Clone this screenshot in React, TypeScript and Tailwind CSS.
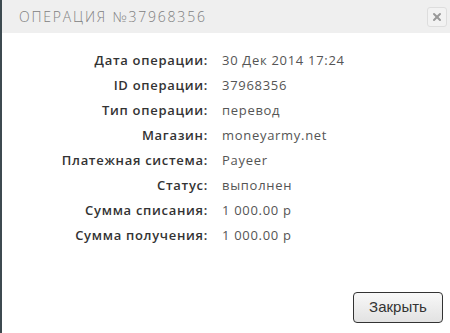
import { X } from "lucide-react";

const rows: [string, string][] = [
  ["Дата операции:", "30 Дек 2014 17:24"],
  ["ID операции:", "37968356"],
  ["Тип операции:", "перевод"],
  ["Магазин:", "moneyarmy.net"],
  ["Платежная система:", "Payeer"],
  ["Статус:", "выполнен"],
  ["Сумма списания:", "1 000.00 р"],
  ["Сумма получения:", "1 000.00 р"],
];

export default function App() {
  return (
    <div className="w-[450px] h-[333px] bg-white border-l-2 border-[#3d4a50] flex flex-col font-['Open_Sans',sans-serif]">
      <div className="h-[33px] bg-[#efefef] flex items-center justify-between pl-[17px] pr-[3px]">
        <span className="text-[14px] tracking-[1.8px] text-[#808080] font-light uppercase">Операция №37968356</span>
        <button className="w-[20px] h-[20px] border border-[#ddd] rounded-[3px] flex items-center justify-center bg-[#f2f2f2]">
          <X size={12} strokeWidth={4} className="text-[#999]" />
        </button>
      </div>
      <div className="pt-[15px] flex flex-col">
        {rows.map(([k, v]) => (
          <div key={k} className="flex h-[25px] items-center text-[13px] tracking-[0.7px]">
            <div className="w-[206px] text-right font-semibold text-[#333]">{k}</div>
            <div className="pl-[14px] text-[#555]">{v}</div>
          </div>
        ))}
      </div>
      <div className="flex-1" />
      <div className="flex justify-end pr-[7px] pb-[10px]">
        <button className="w-[90px] h-[31px] rounded-[4px] border border-[#333] bg-gradient-to-b from-[#f8f8f8] to-[#e2e2e2] text-[15px] text-[#333] font-['Liberation_Sans',sans-serif]">
          Закрыть
        </button>
      </div>
    </div>
  );
}
